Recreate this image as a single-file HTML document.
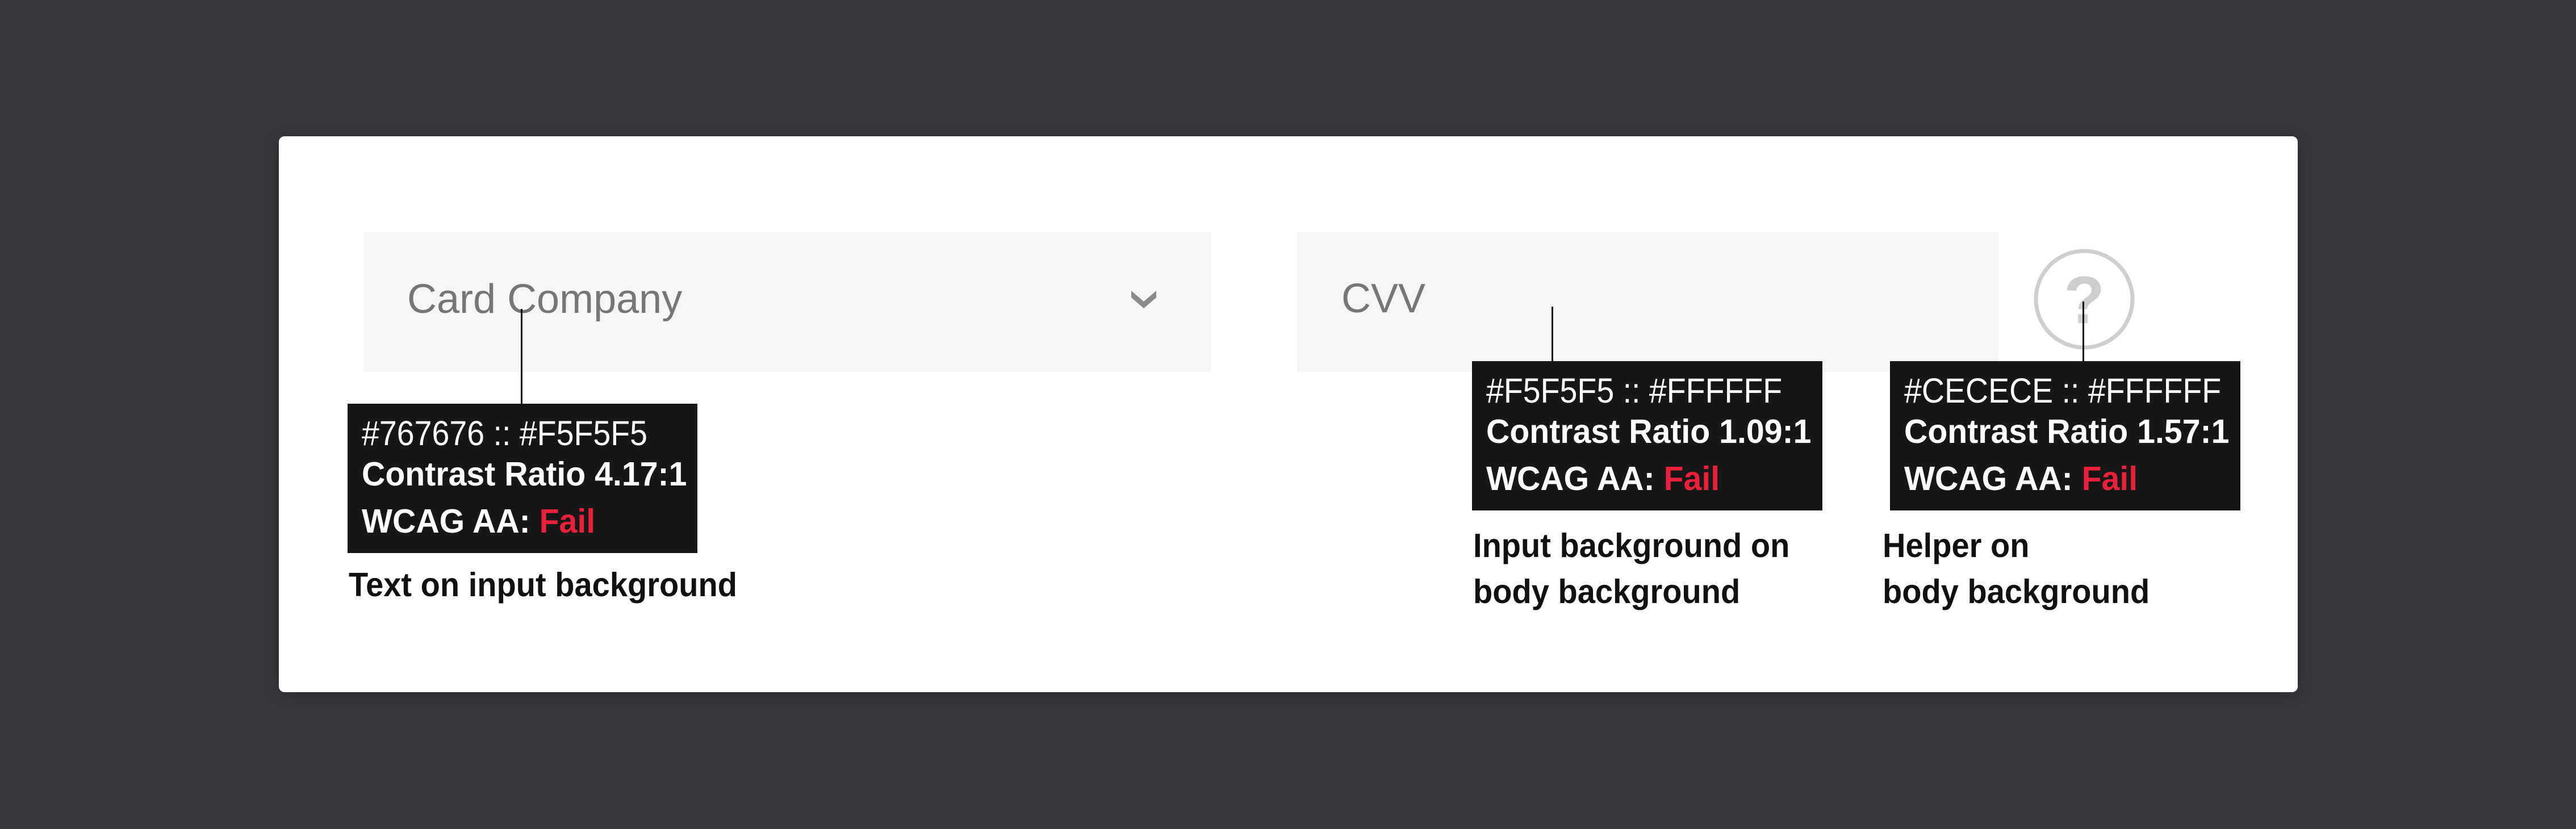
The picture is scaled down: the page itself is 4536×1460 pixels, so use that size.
<!DOCTYPE html>
<html><head><meta charset="utf-8">
<style>
html,body{margin:0;padding:0}
body{width:4536px;height:1460px;background:#38373c;position:relative;overflow:hidden;font-family:"Liberation Sans",sans-serif}
.card{position:absolute;left:491px;top:240px;width:3555px;height:979px;background:#fff;border-radius:10px;box-shadow:0 4px 30px rgba(0,0,0,0.25)}
.abs{position:absolute}
.inp{position:absolute;background:#f5f5f5;top:408px;height:247px}
.ph{position:absolute;font-family:"Liberation Sans",sans-serif;font-size:72px;line-height:72px;color:#767676;white-space:nowrap}
.line{position:absolute;width:3px;background:#111}
.box{position:absolute;background:#171717;width:617px;height:263px;color:#fff}
.box div{position:absolute;left:25px;white-space:nowrap;line-height:1;transform-origin:0 0}
.l1{top:22px;font-size:61px;transform:scaleX(0.91)}
.l2{top:95px;font-size:59px;font-weight:bold;transform:scaleX(0.97)}
.l3{top:178px;font-size:59px;font-weight:bold;transform:scaleX(0.97)}
.red{color:#e8203a}
.cap{position:absolute;font-size:59px;line-height:1;font-weight:bold;color:#111;white-space:nowrap;transform-origin:0 0;transform:scaleX(0.95)}
</style></head><body>
<div class="card"></div>
<div class="inp" style="left:640px;width:1492px"></div>
<div class="ph" style="left:717px;top:491px">Card Company</div>
<svg class="abs" style="left:0;top:0" width="4536" height="1460">
<polygon points="1992,512 2014,531 2036,512 2036,524 2014,543 1992,524" fill="#8a8a8a"/>
<circle cx="3670" cy="527" r="85" fill="none" stroke="#cecece" stroke-width="7"/>
<text x="3670" y="569" text-anchor="middle" font-family="Liberation Sans, sans-serif" font-weight="bold" font-size="118" fill="#cecece">?</text>
</svg>
<div class="inp" style="left:2284px;width:1235px"></div>
<div class="ph" style="left:2362px;top:490px">CVV</div>
<div class="line" style="left:917px;top:544px;height:168px"></div>
<div class="line" style="left:2732px;top:540px;height:97px"></div>
<div class="line" style="left:3667px;top:531px;height:106px"></div>
<div class="box" style="left:612px;top:711px;width:616px">
<div class="l1">#767676 :: #F5F5F5</div>
<div class="l2">Contrast Ratio 4.17:1</div>
<div class="l3">WCAG AA: <span class="red">Fail</span></div>
</div>
<div class="cap" style="left:614px;top:1001px">Text on input background</div>
<div class="box" style="left:2592px;top:636px">
<div class="l1">#F5F5F5 :: #FFFFFF</div>
<div class="l2">Contrast Ratio 1.09:1</div>
<div class="l3">WCAG AA: <span class="red">Fail</span></div>
</div>
<div class="cap" style="left:2594px;top:932px">Input background on</div>
<div class="cap" style="left:2594px;top:1013px">body background</div>
<div class="box" style="left:3328px;top:636px">
<div class="l1">#CECECE :: #FFFFFF</div>
<div class="l2">Contrast Ratio 1.57:1</div>
<div class="l3">WCAG AA: <span class="red">Fail</span></div>
</div>
<div class="cap" style="left:3315px;top:932px">Helper on</div>
<div class="cap" style="left:3315px;top:1013px">body background</div>
</body></html>
